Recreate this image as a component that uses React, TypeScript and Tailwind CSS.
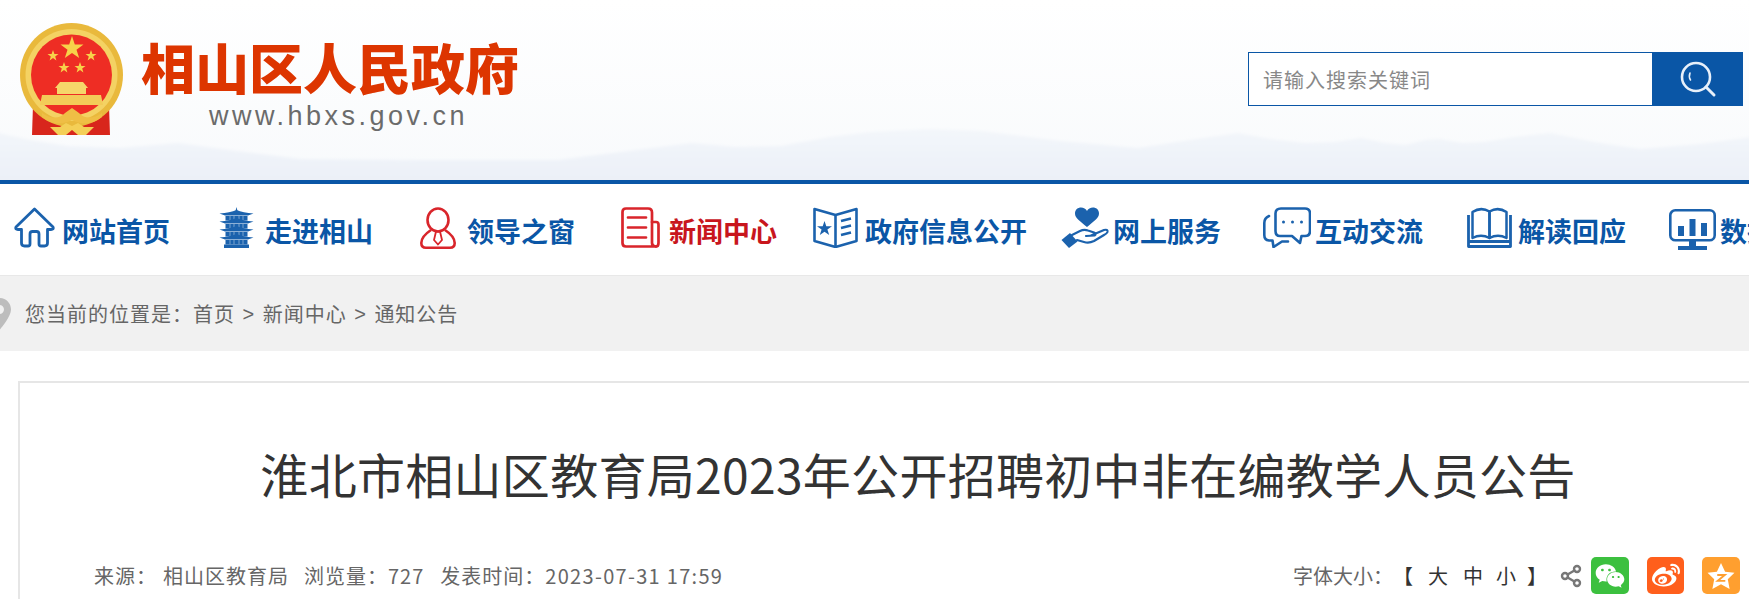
import React from "react";
import { FaWeixin, FaWeibo } from "react-icons/fa";
import { Share2 } from "lucide-react";

const BLUE = "#1b62ad";
const RED = "#d9252b";
const COLON = "\uFF1A";

function Emblem() {
  return (
    <svg width="103" height="112" viewBox="0 0 103 112" className="shrink-0">
      <path d="M13 82 L12 112 L90 112 L89 82 Z" fill="#d8261c" />
      <ellipse cx="51.5" cy="52" rx="51.5" ry="52" fill="#e9b93c" />
      <ellipse cx="51.5" cy="52" rx="46" ry="46" fill="#f4d263" />
      <circle cx="51.5" cy="52" r="40.5" fill="#ee2d24" />
      <polygon fill="#f7d24a" points="52,13 54.8,21.5 63.5,21.5 56.5,26.8 59.2,35 52,30 44.8,35 47.5,26.8 40.5,21.5 49.2,21.5" />
      <polygon fill="#f7d24a" points="33,27 34.4,31 38.5,31 35.2,33.5 36.4,37.5 33,35 29.6,37.5 30.8,33.5 27.5,31 31.6,31" />
      <polygon fill="#f7d24a" points="71,27 72.4,31 76.5,31 73.2,33.5 74.4,37.5 71,35 67.6,37.5 68.8,33.5 65.5,31 69.6,31" />
      <polygon fill="#f7d24a" points="44,39 45.4,43 49.5,43 46.2,45.5 47.4,49.5 44,47 40.6,49.5 41.8,45.5 38.5,43 42.6,43" />
      <polygon fill="#f7d24a" points="60,39 61.4,43 65.5,43 62.2,45.5 63.4,49.5 60,47 56.6,49.5 57.8,45.5 54.5,43 58.6,43" />
      <path d="M40 59 L63 59 L68 65 L66 65 L66 71 L37 71 L37 65 L35 65 Z" fill="#f6d66a" />
      <path d="M22 72 L81 72 L83 82 L20 82 Z" fill="#f3cb58" />
      <path d="M22 90 C30 96 40 96 45 90 L52 85 L59 90 C64 96 74 96 82 90 L82 94 C72 102 62 102 52 97 C42 102 32 102 22 94 Z" fill="#efbe45" />
      <path d="M30 104 L40 104 L46 100 L52 103 L58 100 L64 104 L74 104 L66 112 L38 112 Z" fill="#f4cf57" />
      <path d="M46 112 L52 107 L58 112 Z" fill="#d8261c" />
    </svg>
  );
}

function HomeIcon() {
  return (
    <svg width="41" height="41" viewBox="0 0 41 41" fill="none" stroke={BLUE} strokeWidth="2.8" strokeLinejoin="round" strokeLinecap="round">
      <path d="M20.5 2 L39 20 Q40 22.5 37 22.5 L33.5 22.5 V36 Q33.5 39 30.5 39 H27 Q25 39 25 37 V27 Q25 24.5 22.5 24.5 H18.5 Q16 24.5 16 27 V37 Q16 39 14 39 H10.5 Q7.5 39 7.5 36 V22.5 L4 22.5 Q1 22.5 2 20 Z" />
    </svg>
  );
}

function TowerIcon() {
  const tiers = [7, 15, 23, 31];
  return (
    <svg width="35" height="41" viewBox="0 0 35 41" fill={BLUE}>
      <path d="M17.5 0 L18.5 4 H16.5 Z" />
      {tiers.map((y) => (
        <g key={y}>
          <path d={`M0.5 ${y - 0.5} Q11 ${y - 1.5} 17.5 ${y - 4} Q24 ${y - 1.5} 34.5 ${y - 0.5} L29 ${y + 1.5} H6 Z`} />
          <rect x="6.5" y={y + 2} width="22" height="4.5" />
          <path d={`M11 ${y + 2} v4.5 M15 ${y + 2} v4.5 M20 ${y + 2} v4.5 M24 ${y + 2} v4.5`} stroke="#fff" strokeWidth="0.7" opacity="0.6" />
        </g>
      ))}
      <rect x="5" y="37.5" width="25" height="3.5" />
    </svg>
  );
}

function LeaderIcon() {
  return (
    <svg width="36" height="42" viewBox="0 0 36 42" fill="none" stroke={RED} strokeWidth="2.6" strokeLinejoin="round">
      <ellipse cx="18" cy="13" rx="10.5" ry="11.5" />
      <path d="M11 23 C5 27 1.3 32 1.3 36 Q1.3 40.7 6 40.7 H30 Q34.7 40.7 34.7 36 C34.7 32 31 27 25 23" />
      <path d="M16 24.5 H20 L22 33 L18 37.5 L14 33 Z" strokeWidth="1.8" />
    </svg>
  );
}

function NewsIcon() {
  return (
    <svg width="39" height="41" viewBox="0 0 39 41" fill="none" stroke={RED} strokeWidth="2.7" strokeLinejoin="round" strokeLinecap="round">
      <path d="M5 1.5 H27 Q31 1.5 31 5.5 V36 Q31 39.5 35 39.5 H5 Q1.5 39.5 1.5 36 V5 Q1.5 1.5 5 1.5 Z" />
      <path d="M31 15 H35 Q37.5 15 37.5 17.5 V36 Q37.5 39.5 35 39.5" />
      <path d="M7 10.5 H25 M7 20.5 H25 M7 30.5 H25" />
    </svg>
  );
}

function GovIcon() {
  return (
    <svg width="45" height="41" viewBox="0 0 45 41" fill="none" stroke={BLUE} strokeWidth="2.6" strokeLinejoin="round">
      <path d="M1.5 2 L22.5 8 L43.5 2 V34 L22.5 40 L1.5 34 Z" />
      <path d="M22.5 8 V40" />
      <polygon fill={BLUE} stroke="none" points="11.5,14 13.3,19.3 19,19.3 14.4,22.6 16.2,28 11.5,24.7 6.8,28 8.6,22.6 4,19.3 9.7,19.3" />
      <path d="M28 14 L38 11.5 M28 21 L38 18.5 M28 28 L38 25.5" />
    </svg>
  );
}

function ServiceIcon() {
  return (
    <svg width="48" height="41" viewBox="0 0 48 41" fill="none">
      <path d="M26 20 C19 14 14 11 14 6.5 C14 2.5 17 0.5 20 0.5 C22.5 0.5 25 2 26 4 C27 2 29.5 0.5 32 0.5 C35 0.5 38 2.5 38 6.5 C38 11 33 14 26 20 Z" fill={BLUE} />
      <path d="M11 28 L19 24 Q23 22 27 23.5 L33 25.5 Q36 27 33.5 28.5 L25 29 M30 28.5 L43 23 Q47 22 46.5 25 Q46 26.5 43 28 L33 34 Q28 36.5 23 35 L16 33" stroke={BLUE} strokeWidth="2.2" strokeLinecap="round" strokeLinejoin="round" />
      <path d="M0.5 33 L9 26 L16.5 34.5 L8 41 Z" fill={BLUE} />
    </svg>
  );
}

function TalkIcon() {
  return (
    <svg width="48" height="41" viewBox="0 0 48 41" fill="none" stroke={BLUE} strokeWidth="2.6" strokeLinejoin="round" strokeLinecap="round">
      <path d="M18 1.5 H42 Q47 1.5 47 6.5 V24 Q47 29 42 29 H38.5 L37 36 L29 29 H17 Q12.5 29 12.5 24 V6.5 Q12.5 1.5 18 1.5 Z" />
      <path d="M6 9 Q1.3 11 1.3 16 V28 Q1.3 33 6 33.5 H9.5 L10.5 40 L19 34.5 H25" />
      <circle cx="20.5" cy="15" r="1.5" fill={BLUE} stroke="none" />
      <circle cx="29.5" cy="15" r="1.5" fill={BLUE} stroke="none" />
      <circle cx="38.5" cy="15" r="1.5" fill={BLUE} stroke="none" />
    </svg>
  );
}

function BookIcon() {
  return (
    <svg width="45" height="41" viewBox="0 0 45 41" fill="none" stroke={BLUE} strokeWidth="2.5" strokeLinejoin="round">
      <path d="M1.5 8 V39.5 H43.5 V8" strokeWidth="2.8" />
      <path d="M5.5 5 Q14 -0.5 22.5 4.5 V31 Q14 26.5 5.5 31 Z" />
      <path d="M39.5 5 Q31 -0.5 22.5 4.5 V31 Q31 26.5 39.5 31 Z" />
      <path d="M2 34.5 H43 " strokeWidth="3" />
    </svg>
  );
}

function DataIcon() {
  return (
    <svg width="47" height="41" viewBox="0 0 47 41" fill="none">
      <rect x="1.3" y="1.3" width="44.4" height="30" rx="5" stroke={BLUE} strokeWidth="2.6" />
      <rect x="9" y="17" width="6" height="10" fill={BLUE} />
      <rect x="20.5" y="10" width="6" height="17" fill={BLUE} />
      <rect x="32" y="14" width="6" height="13" fill={BLUE} />
      <rect x="20" y="32" width="7" height="5" fill={BLUE} />
      <rect x="9" y="37" width="29" height="4" fill={BLUE} />
    </svg>
  );
}

function SearchIcon() {
  return (
    <svg width="38" height="38" viewBox="0 0 38 38" fill="none" stroke="#e8f0fa" strokeLinecap="round">
      <circle cx="17" cy="17" r="14" strokeWidth="2.6" />
      <path d="M27 27 L35 35" strokeWidth="3" />
      <path d="M11 13 Q9.5 17 11.5 20" strokeWidth="1.6" />
    </svg>
  );
}

function PinIcon() {
  return (
    <svg width="23" height="32" viewBox="0 0 23 32" className="-ml-[12px] shrink-0">
      <path fillRule="evenodd" d="M11.5 0 C5 0 0 5 0 11.5 C0 19 11.5 32 11.5 32 C11.5 32 23 19 23 11.5 C23 5 18 0 11.5 0 Z M11.5 7 A4.5 4.5 0 1 1 11.4 7 Z" fill="#bdbdbd" />
    </svg>
  );
}

function QzoneIcon() {
  return (
    <svg width="28" height="28" viewBox="0 0 26 26">
      <polygon fill="#fff" points="13,1 16.8,9 25.5,10 19.3,16 21,25 13,20.6 5,25 6.7,16 0.5,10 9.2,9" />
      <path d="M9.5 12 H16.5 L10 17.5 H17" fill="none" stroke="#ff9f2f" strokeWidth="1.8" />
    </svg>
  );
}

const navItems = [
  { w: "w-[205px]", label: "网站首页", icon: <HomeIcon />, ml: "ml-[7px]", io: "-mt-[5px]", active: false },
  { w: "w-[201px]", label: "走进相山", icon: <TowerIcon />, ml: "ml-[11px]", io: "-mt-[5px]", active: false },
  { w: "w-[201px]", label: "领导之窗", icon: <LeaderIcon />, ml: "ml-[11px]", io: "-mt-[4px]", active: false },
  { w: "w-[192px]", label: "新闻中心", icon: <NewsIcon />, ml: "ml-[9px]", io: "-mt-[5px]", active: true },
  { w: "w-[248px]", label: "政府信息公开", icon: <GovIcon />, ml: "ml-[7px]", io: "-mt-[5px]", active: false },
  { w: "w-[202px]", label: "网上服务", icon: <ServiceIcon />, ml: "ml-[4px]", io: "-mt-[5px]", active: false },
  { w: "w-[204px]", label: "互动交流", icon: <TalkIcon />, ml: "ml-[4px]", io: "-mt-[5px]", active: false },
  { w: "w-[202px]", label: "解读回应", icon: <BookIcon />, ml: "ml-[6px]", io: "-mt-[5px]", active: false },
  { w: "w-[200px]", label: "数据发布", icon: <DataIcon />, ml: "ml-[4px]", io: "-mt-[1px]", active: false },
];

export default function App() {
  return (
    <div className="h-[599px] w-[1749px] overflow-hidden bg-white font-['Noto_Sans_CJK_SC','Noto_Sans',sans-serif] text-[#666]">
      <header className="relative h-[184px] border-b-[4px] border-[#0a56a6] bg-linear-to-b from-white to-[#f8fafc]">
        <svg className="absolute inset-0" width="1749" height="180" viewBox="0 0 1749 180" preserveAspectRatio="none">
          <defs>
            <linearGradient id="m" x1="0" y1="0" x2="0" y2="1">
              <stop offset="0" stopColor="#f3f6fa" />
              <stop offset="1" stopColor="#eaeff7" />
            </linearGradient>
            <filter id="b" x="-2%" y="-10%" width="104%" height="120%">
              <feGaussianBlur stdDeviation="1.6" />
            </filter>
          </defs>
          <path
            d="M-10 131 L30 140 L67 146 L120 148 L178 143 L230 150 L301 159 L420 160 L558 160 L620 152 L692 143 L735 147 L781 146 L830 137 L870 132 L930 129 L982 131 L1060 141 L1138 148 L1190 140 L1238 133 L1270 139 L1305 143 L1335 142 L1361 138 L1385 143 L1405 145 L1425 140 L1439 139 L1462 143 L1484 142 L1515 137 L1550 133 L1600 143 L1640 149 L1700 144 L1760 136 V190 H-10 Z"
            fill="url(#m)"
            filter="url(#b)"
          />
        </svg>
        <div className="relative flex h-full items-start justify-between pl-[20px] pr-[6px]">
          <div className="flex pt-[23px]">
            <Emblem />
            <div className="ml-[18px] flex flex-col pt-[16px]">
              <div className="h-[56px] text-[54px] font-black leading-[56px] text-[#dd3500]">相山区人民政府</div>
              <div className="ml-[68px] mt-[5px] font-['Liberation_Sans',sans-serif] text-[27px] leading-[32px] tracking-[3.5px] text-[#6b6b6b]">
                www.hbxs.gov.cn
              </div>
            </div>
          </div>
          <div className="mt-[52px] flex h-[54px] w-[495px]">
            <input
              readOnly
              placeholder="请输入搜索关键词"
              className="h-full w-[404px] border border-r-0 border-[#0a56a6] bg-white pl-[14px] text-[20px] tracking-[1px] outline-none placeholder:text-[#888]"
            />
            <div className="flex w-[91px] items-center justify-center bg-[#0a56a6]">
              <SearchIcon />
            </div>
          </div>
        </div>
      </header>

      <nav className="flex h-[92px] items-center border-b border-[#e8e8e8] pl-[14px]">
        {navItems.map((n) => (
          <div key={n.label} className={`flex shrink-0 items-center ${n.w}`}>
            <span className={`block ${n.io}`}>{n.icon}</span>
            <span className={`${n.ml} mt-[2px] whitespace-nowrap text-[27px] font-bold leading-none ${n.active ? "text-[#c8161d]" : "text-[#0a56a6]"}`}>
              {n.label}
            </span>
          </div>
        ))}
      </nav>

      <div className="flex h-[75px] items-center bg-[#f1f1f1] text-[20px] tracking-[1px] text-[#666]">
        <PinIcon />
        <span className="ml-[14px] whitespace-nowrap">您当前的位置是{COLON}首页</span>
        <span className="mx-[7.5px] font-['Liberation_Sans',sans-serif]">&gt;</span>
        <span className="whitespace-nowrap">新闻中心</span>
        <span className="mx-[7.5px] font-['Liberation_Sans',sans-serif]">&gt;</span>
        <span className="whitespace-nowrap">通知公告</span>
      </div>

      <main className="ml-[18px] mt-[30px] h-[300px] w-[1800px] border-2 border-[#e6e6e6]">
        <h1 className="mt-[54px] h-[72px] text-center text-[48px] font-normal leading-[72px] tracking-[0.3px] text-[#333]">
          淮北市相山区教育局2023年公开招聘初中非在编教学人员公告
        </h1>
        <div className="mt-[48px] flex w-[1720px] items-center justify-between pl-[74px] text-[20px]">
          <div className="flex tracking-[1px]">
            <span>来源{COLON}</span>
            <span className="ml-[6px]">相山区教育局</span>
            <span className="ml-[15px]">浏览量{COLON}727</span>
            <span className="ml-[16px]">
              发表时间{COLON}
              <span className="tracking-[1.3px]">2023-07-31 17:59</span>
            </span>
          </div>
          <div className="flex items-center">
            <span>字体大小{COLON}</span>
            <span className="text-[#333]">【</span>
            <span className="ml-[15px] text-[#333]">大</span>
            <span className="ml-[15px] text-[#333]">中</span>
            <span className="ml-[13px] text-[#333]">小</span>
            <span className="ml-[11px] text-[#333]">】</span>
            <Share2 size={24} strokeWidth={2.4} color="#777" className="ml-[12px]" />
            <div className="ml-[8px] flex h-[37px] w-[38px] items-center justify-center rounded-[5px] bg-[#3cc03f]">
              <FaWeixin size={30} color="#fff" />
            </div>
            <div className="ml-[18px] flex h-[37px] w-[37px] items-center justify-center rounded-[5px] bg-[#ff5f1c]">
              <FaWeibo size={28} color="#fff" />
            </div>
            <div className="ml-[18px] flex h-[37px] w-[38px] items-center justify-center rounded-[5px] bg-[#ff9f2f]">
              <QzoneIcon />
            </div>
          </div>
        </div>
      </main>
    </div>
  );
}
